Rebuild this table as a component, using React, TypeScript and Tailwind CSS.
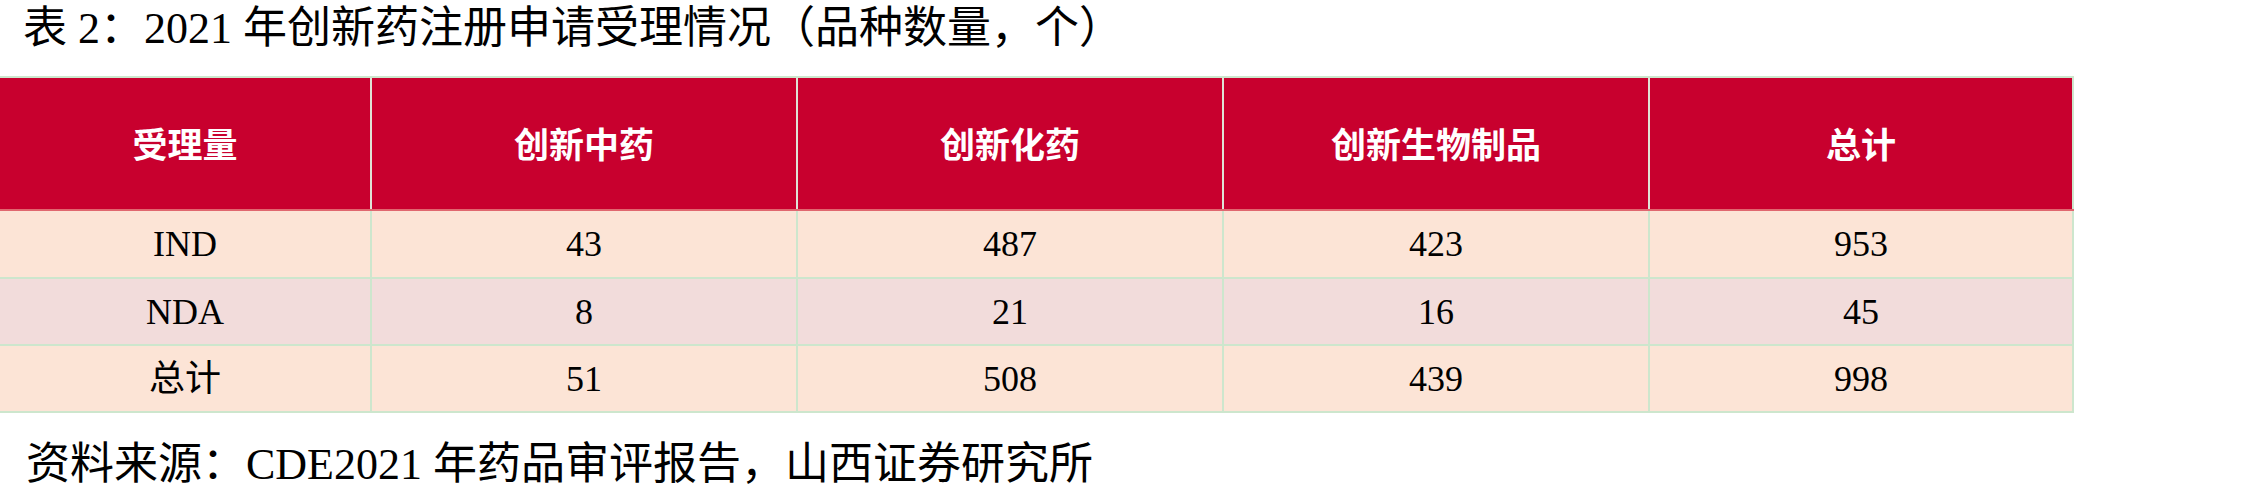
import React from 'react';

// 表格数据
const headers = ['受理量', '创新中药', '创新化药', '创新生物制品', '总计'];

const rows = [
  { label: 'IND', values: ['43', '487', '423', '953'], bg: 'bg-[#fce4d6]', h: 'h-[68px]' },
  { label: 'NDA', values: ['8', '21', '16', '45'], bg: 'bg-[#f2dcdb]', h: 'h-[67px]' },
  { label: '总计', values: ['51', '508', '439', '998'], bg: 'bg-[#fce4d6]', h: 'h-[67px]' },
];

const serif = "font-['Liberation_Serif','Times_New_Roman','Noto_Sans_CJK_SC',serif]";

export default function App() {
  return (
    <div className={`w-[2255px] h-[497px] bg-white text-black ${serif}`}>
      {/* 标题 */}
      <div className="h-[76px] pt-[2px] pl-[23px] text-[44px] leading-[54px] whitespace-nowrap">
        表 2：2021 年创新药注册申请受理情况（品种数量，个）
      </div>

      {/* 表格 */}
      <div className="w-[2074px] border-t-2 border-[#cde6cd]">
        <div className="grid grid-cols-[372px_426px_426px_426px_424px] h-[133px] bg-[#c8002e] border-b-2 border-[#e0676f]">
          {headers.map((h, i) => (
            <div
              key={h}
              className={`flex items-center justify-center text-white font-bold text-[35px] font-['Noto_Sans_CJK_SC',sans-serif] ${
                i < 4 ? 'border-r-2 border-[#dfe3d6]' : 'border-r-2 border-[#cde6cd]'
              }`}
            >
              {h}
            </div>
          ))}
        </div>

        {rows.map((row) => (
          <div
            key={row.label}
            className={`grid grid-cols-[372px_426px_426px_426px_424px] ${row.h} ${row.bg} border-b-2 border-[#cde6cd]`}
          >
            {[row.label, ...row.values].map((v, i) => (
              <div
                key={i}
                className="flex items-center justify-center text-[36px] border-r-2 border-[#cde6cd]"
              >
                {v}
              </div>
            ))}
          </div>
        ))}
      </div>

      {/* 资料来源 */}
      <div className="mt-[25px] pl-[26px] text-[44px] leading-[54px] whitespace-nowrap">
        资料来源：CDE2021 年药品审评报告，山西证券研究所
      </div>
    </div>
  );
}
